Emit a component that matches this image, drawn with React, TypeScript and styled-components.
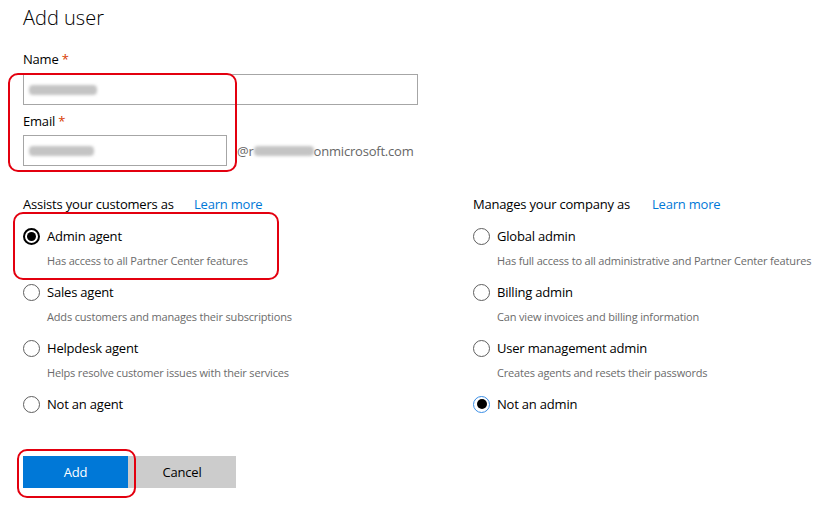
import React from "react";
import styled, { createGlobalStyle } from "styled-components";

const Global = createGlobalStyle`
  html, body { margin: 0; padding: 0; background: #fff; }
  body { font-family: "Open Sans", "Noto Sans", sans-serif; color: #000; letter-spacing: -0.2px; }
`;

const Page = styled.div`
  position: relative;
  width: 826px;
  height: 507px;
  padding: 4px 0 0 23px;
  box-sizing: border-box;
  overflow: hidden;
`;

const Title = styled.h1`
  margin: 0;
  font-size: 20px;
  font-weight: 300;
  line-height: 28px;
  color: #000;
  letter-spacing: 0;
`;

const Label = styled.div<{ $top: number }>`
  margin-top: ${(p) => p.$top}px;
  font-size: 13px;
  line-height: 20px;
  color: #000;
`;

const Req = styled.span`
  color: #d83b01;
`;

const Input = styled.div<{ $w: number }>`
  position: relative;
  width: ${(p) => p.$w}px;
  height: 31px;
  box-sizing: border-box;
  border: 1px solid #a6a6a6;
  background: #fff;
  display: flex;
  align-items: center;
  padding-left: 5px;
`;

const Smudge = styled.span<{ $w: number }>`
  display: inline-block;
  width: ${(p) => p.$w}px;
  height: 10px;
  background: #c4c4c4;
  border-radius: 4px;
  filter: blur(1.5px);
`;

const EmailRow = styled.div`
  display: flex;
  align-items: center;
  margin-top: 4px;
`;

const Suffix = styled.span`
  margin-left: 10px;
  display: inline-flex;
  align-items: center;
  font-size: 13px;
  color: #666;
`;

const Columns = styled.div`
  display: grid;
  grid-template-columns: 450px 1fr;
  margin-top: 28px;
`;

const GroupHead = styled.div`
  display: flex;
  font-size: 13px;
  line-height: 20px;
  margin-bottom: 12px;
`;

const HeadText = styled.span<{ $w: number }>`
  width: ${(p) => p.$w}px;
`;

const Link = styled.a`
  color: #0078d7;
  text-decoration: none;
`;

const Option = styled.div`
  margin-bottom: 11px;
`;

const OptionRow = styled.div`
  display: flex;
  align-items: center;
  height: 20px;
  font-size: 13px;
`;

const Radio = styled.span<{ $on?: boolean; $focus?: boolean }>`
  width: 17px;
  height: 17px;
  margin-right: 7px;
  box-sizing: border-box;
  border-radius: 50%;
  border: ${(p) =>
    p.$focus ? "1.5px solid #3a8ee6" : p.$on ? "2px solid #000" : "1px solid #5f5f5f"};
  display: inline-flex;
  align-items: center;
  justify-content: center;
  &::after {
    content: "";
    display: ${(p) => (p.$on ? "block" : "none")};
    width: ${(p) => (p.$focus ? 10 : 9)}px;
    height: ${(p) => (p.$focus ? 10 : 9)}px;
    border-radius: 50%;
    background: #000;
  }
`;

const Desc = styled.div`
  margin-top: 5px;
  padding-left: 24px;
  font-size: 11px;
  line-height: 20px;
  color: #6b6b6b;
  letter-spacing: -0.17px;
`;

const Buttons = styled.div`
  display: flex;
  margin-top: 31px;
`;

const Button = styled.button<{ $primary?: boolean; $w: number }>`
  width: ${(p) => p.$w}px;
  height: 32px;
  border: none;
  font-family: inherit;
  font-size: 13px;
  letter-spacing: -0.2px;
  background: ${(p) => (p.$primary ? "#0078d7" : "#cccccc")};
  color: ${(p) => (p.$primary ? "#fff" : "#000")};
  padding: 0;
`;

const Mark = styled.div<{ $x: number; $y: number; $w: number; $h: number }>`
  position: absolute;
  left: ${(p) => p.$x}px;
  top: ${(p) => p.$y}px;
  width: ${(p) => p.$w}px;
  height: ${(p) => p.$h}px;
  box-sizing: border-box;
  border: 2px solid #e3000f;
  border-radius: 10px;
  pointer-events: none;
`;

type Opt = { label: string; desc?: string; on?: boolean; focus?: boolean };

const agents: Opt[] = [
  { label: "Admin agent", desc: "Has access to all Partner Center features", on: true },
  { label: "Sales agent", desc: "Adds customers and manages their subscriptions" },
  { label: "Helpdesk agent", desc: "Helps resolve customer issues with their services" },
  { label: "Not an agent" },
];

const admins: Opt[] = [
  { label: "Global admin", desc: "Has full access to all administrative and Partner Center features" },
  { label: "Billing admin", desc: "Can view invoices and billing information" },
  { label: "User management admin", desc: "Creates agents and resets their passwords" },
  { label: "Not an admin", on: true, focus: true },
];

const Group = ({ head, headW, opts }: { head: string; headW: number; opts: Opt[] }) => (
  <div>
    <GroupHead>
      <HeadText $w={headW}>{head}</HeadText>
      <Link href="#">Learn more</Link>
    </GroupHead>
    {opts.map((o) => (
      <Option key={o.label}>
        <OptionRow>
          <Radio $on={o.on} $focus={o.focus} />
          {o.label}
        </OptionRow>
        {o.desc && <Desc>{o.desc}</Desc>}
      </Option>
    ))}
  </div>
);

export default function App() {
  return (
    <>
      <Global />
      <Page>
        <Title>Add user</Title>
        <Label $top={17}>
          Name <Req>*</Req>
        </Label>
        <Input $w={395} style={{ marginTop: 5 }}>
          <Smudge $w={68} />
        </Input>
        <Label $top={6}>
          Email <Req>*</Req>
        </Label>
        <EmailRow>
          <Input $w={204}>
            <Smudge $w={65} />
          </Input>
          <Suffix>
            @r<Smudge $w={60} />onmicrosoft.com
          </Suffix>
        </EmailRow>
        <Columns>
          <Group head="Assists your customers as" headW={171} opts={agents} />
          <Group head="Manages your company as" headW={179} opts={admins} />
        </Columns>
        <Buttons>
          <Button $primary $w={105}>Add</Button>
          <Button $w={108}>Cancel</Button>
        </Buttons>
        <Mark $x={8} $y={73} $w={229} $h={99} />
        <Mark $x={13} $y={212} $w={266} $h={68} />
        <Mark $x={17} $y={449} $w={119} $h={49} />
      </Page>
    </>
  );
}
